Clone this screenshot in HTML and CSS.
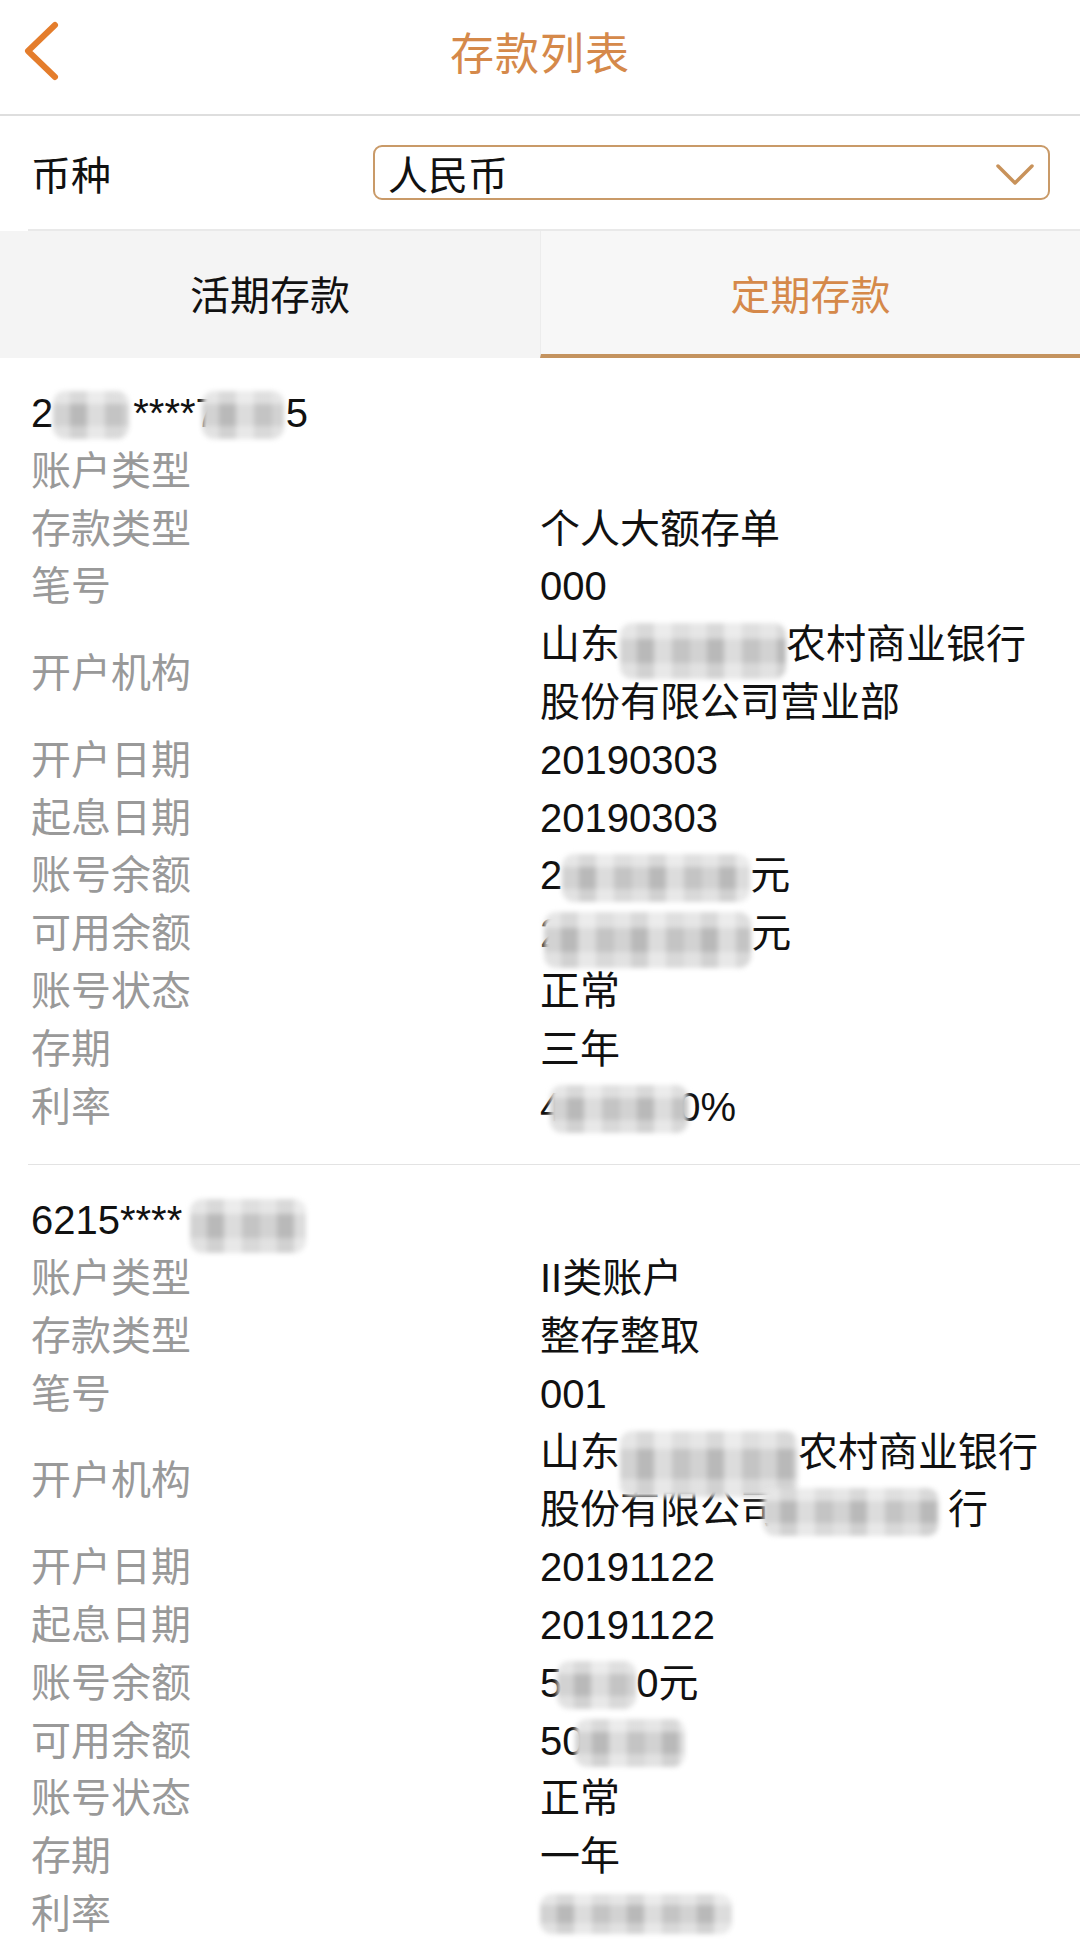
FILE: index.html
```html
<!DOCTYPE html>
<html lang="zh-CN">
<head>
  <meta charset="UTF-8">
  <meta name="viewport" content="width=device-width, initial-scale=1.0">
  <title>存款列表</title>
  <link rel="stylesheet" href="styles.css">
</head>
<body>

  <!-- Top bar -->
  <header class="topbar">
    <a class="back" href="#">
      <svg width="40" height="64" viewBox="0 0 40 64">
        <polyline points="33,6 6,32 33,58" fill="none" stroke="#e47d2c" stroke-width="6" stroke-linecap="round" stroke-linejoin="round"/>
      </svg>
    </a>
    <h1 class="title">存款列表</h1>
    <span></span>
  </header>

  <!-- Currency -->
  <div class="currency">
    <span class="currency-label">币种</span>
    <div class="select">
      <span>人民币</span>
      <svg width="42" height="26" viewBox="0 0 42 26">
        <polyline points="4,4 21,21 38,4" fill="none" stroke="#c8925a" stroke-width="3.5" stroke-linecap="round" stroke-linejoin="round"/>
      </svg>
    </div>
  </div>

  <!-- Tabs -->
  <nav class="tabs">
    <a href="#" class="tab">活期存款</a>
    <a href="#" class="tab active">定期存款</a>
  </nav>

  <!-- Deposit list -->
  <main>
    <section class="card">
      <div class="acct">2<span class="mask m-acct1a"></span>****7<span class="mask m-acct1b"></span>5</div>
      <div class="row"><span class="label">账户类型</span><span class="value"></span></div>
      <div class="row"><span class="label">存款类型</span><span class="value">个人大额存单</span></div>
      <div class="row"><span class="label">笔号</span><span class="value">000</span></div>
      <div class="row"><span class="label">开户机构</span><span class="value">山东<span class="mask m-org1"></span>农村商业银行<br>股份有限公司营业部</span></div>
      <div class="row"><span class="label">开户日期</span><span class="value">20190303</span></div>
      <div class="row"><span class="label">起息日期</span><span class="value">20190303</span></div>
      <div class="row"><span class="label">账号余额</span><span class="value">2<span class="mask m-bal1"></span>元</span></div>
      <div class="row"><span class="label">可用余额</span><span class="value">2<span class="mask m-avail1"></span>元</span></div>
      <div class="row"><span class="label">账号状态</span><span class="value">正常</span></div>
      <div class="row"><span class="label">存期</span><span class="value">三年</span></div>
      <div class="row"><span class="label">利率</span><span class="value">4<span class="mask m-rate1"></span>0%</span></div>
    </section>

    <section class="card">
      <div class="acct">6215****<span class="mask m-acct2"></span></div>
      <div class="row"><span class="label">账户类型</span><span class="value">II类账户</span></div>
      <div class="row"><span class="label">存款类型</span><span class="value">整存整取</span></div>
      <div class="row"><span class="label">笔号</span><span class="value">001</span></div>
      <div class="row"><span class="label">开户机构</span><span class="value">山东<span class="mask m-org2a"></span>农村商业银行<br>股份有限公司<span class="mask m-org2b"></span>行</span></div>
      <div class="row"><span class="label">开户日期</span><span class="value">20191122</span></div>
      <div class="row"><span class="label">起息日期</span><span class="value">20191122</span></div>
      <div class="row"><span class="label">账号余额</span><span class="value">5<span class="mask m-bal2"></span>0元</span></div>
      <div class="row"><span class="label">可用余额</span><span class="value">50<span class="mask m-avail2"></span></span></div>
      <div class="row"><span class="label">账号状态</span><span class="value">正常</span></div>
      <div class="row"><span class="label">存期</span><span class="value">一年</span></div>
      <div class="row"><span class="label">利率</span><span class="value"><span class="mask m-rate2"></span></span></div>
    </section>
  </main>

</body>
</html>
```

FILE: styles.css
```css
/* Page */
body {
  margin: 0;
  width: 1080px;
  background: #fff;
  color: #111;
  font-family: "Liberation Sans", "Noto Sans CJK SC", sans-serif;
  font-size: 40px;
}
a {
  text-decoration: none;
  color: inherit;
}

/* Top bar */
.topbar {
  display: grid;
  grid-template-columns: 120px 1fr 120px;
  align-items: center;
  height: 102px;
  padding-bottom: 12px;
  border-bottom: 2px solid #dedede;
}
.back {
  display: flex;
  padding-left: 22px;
}
.title {
  margin: 0;
  text-align: center;
  font-size: 44px;
  font-weight: normal;
  color: #d5894a;
  letter-spacing: 1px;
}

/* Currency row */
.currency {
  display: flex;
  align-items: center;
  height: 113px;
  margin-left: 28px;
  padding-right: 30px;
  border-bottom: 2px solid #e9e9e9;
}
.currency-label {
  width: 342px;
  padding-left: 3px;
}
.select {
  flex: 1;
  height: 51px;
  display: flex;
  align-items: center;
  justify-content: space-between;
  padding: 0 12px 0 13px;
  border: 2px solid #c99a68;
  border-radius: 9px;
}
.select svg {
  margin-top: 4px;
}

/* Tabs */
.tabs {
  display: grid;
  grid-template-columns: 1fr 1fr;
  height: 127px;
  background: #f4f4f4;
}
.tab {
  display: flex;
  align-items: center;
  justify-content: center;
  padding-bottom: 4px;
}
.tab.active {
  color: #d5894a;
  background: #f7f7f7;
  border-left: 1px solid #ececec;
  border-bottom: 4px solid #c4935f;
  padding-bottom: 0;
}

/* Deposit cards */
.card {
  margin-left: 28px;
  padding: 27px 0 28px 3px;
  border-bottom: 1px solid #e3e3e3;
  line-height: 57.8px;
}
.card:last-child {
  border-bottom: none;
}
.acct {
  height: 57.8px;
}
.row {
  display: grid;
  grid-template-columns: 509px 1fr;
  align-items: center;
}
.label {
  color: #999;
}
.value {
  color: #111;
}

/* Blurred privacy masks */
.mask {
  display: inline-block;
  position: relative;
  z-index: 1;
  height: 48px;
  vertical-align: middle;
  margin: -6px 0 -4px;
  border-radius: 12px;
  background:
    linear-gradient(180deg, rgba(255,255,255,.45) 0 28%, transparent 28% 72%, rgba(255,255,255,.35) 72%),
    repeating-linear-gradient(90deg, #d2d2d2 0 17px, #b9b9b9 17px 34px, #dcdcdc 34px 52px, #c4c4c4 52px 70px);
  filter: blur(2.5px);
}
.m-acct1a { width: 76px; margin-right: 4px; }
.m-acct1b { width: 82px; margin-left: -16px; margin-right: 2px; }
.m-acct2 { width: 116px; margin-left: 8px; height: 54px; margin-bottom: -10px; }
.m-org1 { width: 166px; height: 56px; margin-bottom: -12px; }
.m-org2a { width: 178px; height: 66px; margin-top: -4px; margin-bottom: -22px; }
.m-org2b { width: 176px; margin-left: -17px; margin-right: 9px; }
.m-bal1 { width: 188px; }
.m-avail1 { width: 207px; margin-left: -18px; height: 56px; margin-bottom: -12px; }
.m-rate1 { width: 138px; margin-left: -12px; margin-right: -10px; }
.m-bal2 { width: 79px; margin-left: -5px; }
.m-avail2 { width: 110px; margin-left: -10px; }
.m-rate2 { width: 192px; height: 40px; margin-bottom: 0; }
```
